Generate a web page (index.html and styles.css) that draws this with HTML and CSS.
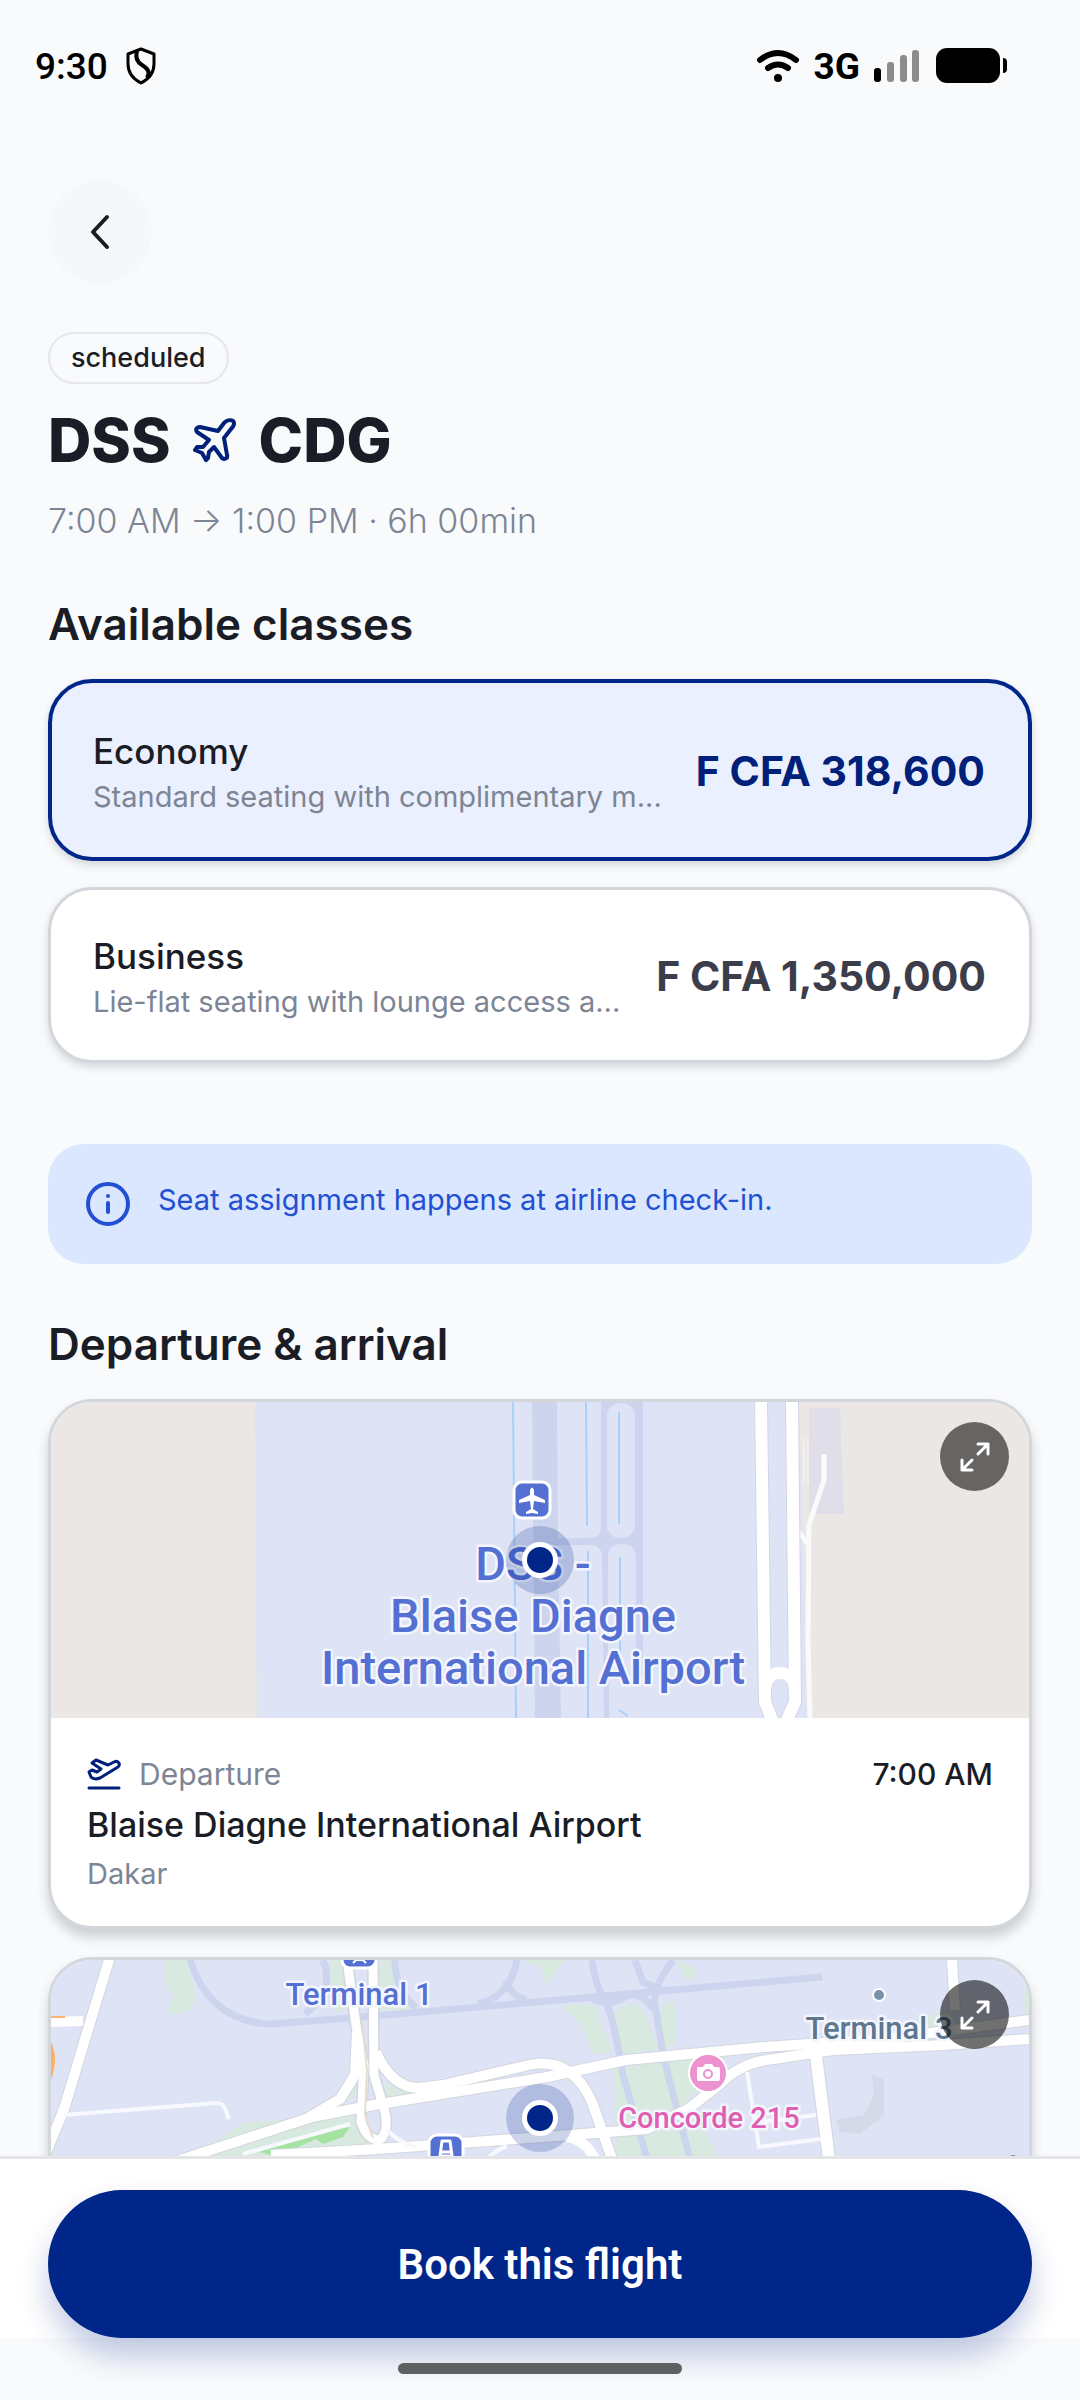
FILE: index.html
```html
<!DOCTYPE html>
<html lang="en">
<head>
  <meta charset="UTF-8">
  <meta name="viewport" content="width=device-width, initial-scale=1">
  <title>DSS - CDG</title>
  <link rel="stylesheet" href="styles.css">
</head>
<body>
  <!-- Status Bar -->
  <header class="status-bar">
    <div class="status-group">
      <span class="clock">9:30</span>
      <svg class="shield" width="30" height="38" viewBox="0 0 30 38" fill="none" stroke="#000" stroke-width="3" stroke-linejoin="round">
        <path d="M15 2 L28 7 V17 C28 26 23 32 15 36 C7 32 2 26 2 17 V7 Z"/>
        <path d="M11 4 C9 11 11 15 16 18 C23 22 24 26 21 31" stroke-width="4"/>
      </svg>
    </div>
    <div class="status-group">
      <svg class="wifi" width="44" height="34" viewBox="0 0 44 34" fill="none" stroke="#000" stroke-width="6" stroke-linecap="round">
        <path d="M4 11 Q22 -3 40 11"/>
        <path d="M12 19 Q22 12 32 19"/>
        <circle cx="22" cy="29" r="4" fill="#000" stroke="none"/>
      </svg>
      <span class="network">3G</span>
      <svg class="signal" width="46" height="34" viewBox="0 0 46 34">
        <rect x="0" y="19" width="7" height="14" rx="3" fill="#000"/>
        <rect x="13" y="13" width="7" height="20" rx="3" fill="#8c8c8d"/>
        <rect x="26" y="6" width="7" height="27" rx="3" fill="#8c8c8d"/>
        <rect x="38" y="1" width="7" height="32" rx="3" fill="#8c8c8d"/>
      </svg>
      <svg width="72" height="36" viewBox="0 0 72 36">
        <rect x="0" y="0" width="64" height="35" rx="11"/>
        <path d="M67 10 Q71 10 71 14 V21 Q71 25 67 25 Z"/>
      </svg>
    </div>
  </header>

  <!-- Flight Details -->
  <main class="content">
    <button class="back-button" type="button" aria-label="Back">
      <svg width="24" height="40" viewBox="0 0 24 40" fill="none" stroke="#1b1c24" stroke-width="4" stroke-linecap="round" stroke-linejoin="round">
        <path d="M19 5 L5 20 L19 35"/>
      </svg>
    </button>

    <span class="badge">scheduled</span>
    <h1 class="route">
      <span>DSS</span>
      <svg width="44" height="44" viewBox="0 0 44 44" fill="none" stroke="#00207a" stroke-width="4" stroke-linejoin="round" stroke-linecap="round">
        <path d="M40 3 C37 1 33 3 31 5 L25 13 L7 9 C4 9 2 11 4 14 L16 22 L10 29 L4 29 L2 32 L9 35 L13 42 L15 40 L16 34 L21 29 L29 40 C32 42 35 40 34 37 L31 20 L38 11 C41 8 42 5 40 3 Z"/>
      </svg>
      <span>CDG</span>
    </h1>
    <p class="times">7:00 AM → 1:00 PM · 6h 00min</p>

    <h2 class="section-title">Available classes</h2>
    <div class="class-list">
      <button class="fare selected" type="button" aria-pressed="true">
        <span class="fare-text">
          <span class="fare-name">Economy</span>
          <span class="fare-description">Standard seating with complimentary m...</span>
        </span>
        <span class="fare-price">F CFA 318,600</span>
      </button>
      <button class="fare" type="button" aria-pressed="false">
        <span class="fare-text">
          <span class="fare-name">Business</span>
          <span class="fare-description">Lie-flat seating with lounge access a...</span>
        </span>
        <span class="fare-price">F CFA 1,350,000</span>
      </button>
    </div>

    <div class="notice">
      <svg width="44" height="44" viewBox="0 0 44 44" fill="none" stroke="#2350d2" stroke-width="4" stroke-linecap="round">
        <circle cx="22" cy="22" r="20"/>
        <path d="M22 21 V30"/>
        <path d="M22 14 V14"/>
      </svg>
      <p class="notice-text">Seat assignment happens at airline check-in.</p>
    </div>

    <h2 class="section-title">Departure &amp; arrival</h2>
    <div class="airport-list">
      <article class="airport-card">
        <div class="map">
          <svg class="map-canvas" viewBox="0 0 978 316" preserveAspectRatio="xMidYMid slice">
            <rect width="978" height="316" fill="#eae7e4"/>
            <path d="M204 0 H748 L756 316 H206 Z" fill="#dee3f5"/>
            <!-- Runway and taxiways -->
            <path d="M481 0 H592 V273 H558 V316 H484 Z" fill="#cdd5ee"/>
            <g fill="#dee3f5">
              <path d="M506 0 H550 V124 Q550 136 538 136 H507 Z"/>
              <rect x="556" y="1" width="28" height="135" rx="13"/>
              <path d="M507 143 H539 Q551 143 551 155 L553 316 H510 Z"/>
              <path d="M557 156 Q557 142 571 142 Q585 142 585 156 V273 H557 Z"/>
            </g>
            <g fill="none" stroke="#a6d1fa" stroke-width="2">
              <path d="M462 0 L465 316"/>
              <path d="M535 0 L536 124"/>
              <path d="M568 10 V122"/>
              <path d="M537 149 V316"/>
              <path d="M569 155 V255"/>
              <path d="M568 308 L577 314"/>
            </g>
            <!-- Roads -->
            <path d="M758 6 H789 L793 112 H758 Z" fill="#e0dfe9"/>
            <g fill="none" stroke="#fbfafa">
              <path d="M753 36 V82 M757 36 V82" stroke-width="1"/>
              <path d="M773 52 V78 L758 123 L757 240 L759 316" stroke-width="5"/>
              <path d="M748 130 L757 142" stroke-width="5"/>
            </g>
            <g fill="none" stroke="#d2d7e4" stroke-width="14">
              <path d="M710 0 L714 300 L722 320"/>
              <path d="M741 0 L744 300 L735 320"/>
            </g>
            <g fill="none" stroke="#fff" stroke-width="12">
              <path d="M710 0 L714 300 L722 320"/>
              <path d="M741 0 L744 300 L735 320"/>
              <path d="M714 290 Q714 271 729 271 Q744 271 744 290"/>
            </g>
            <!-- Airport label -->
            <rect x="463" y="80" width="36" height="36" rx="8" fill="#5470d2" stroke="#fff" stroke-width="3"/>
            <path d="M479 88 Q481 83 483 88 V93 L494 98 V101 L483 99 L482 107 L487 110 V112 L481 111 L475 112 V110 L480 107 L479 99 L468 101 V98 L479 93 Z" fill="#fff"/>
            <g class="map-label map-label-large">
              <text x="482" y="178">DSS -</text>
              <text x="482" y="230">Blaise Diagne</text>
              <text x="482" y="282">International Airport</text>
            </g>
            <!-- Pin -->
            <circle cx="489" cy="158" r="34" fill="#00268a" fill-opacity="0.2"/>
            <circle cx="489" cy="158" r="18" fill="#fff"/>
            <circle cx="489" cy="158" r="13" fill="#00268a"/>
          </svg>
          <button class="expand-button" type="button" aria-label="Expand departure map">
            <svg width="30" height="30" viewBox="0 0 30 30" fill="none" stroke="#fff" stroke-width="3" stroke-linecap="round" stroke-linejoin="round">
              <path d="M18 12 L28 2 M18 2 H28 V12"/>
              <path d="M12 18 L2 28 M12 28 H2 V18"/>
            </svg>
          </button>
        </div>
        <div class="airport-info">
          <div class="airport-row">
            <svg width="34" height="32" viewBox="0 0 34 32" fill="none" stroke="#00207a" stroke-width="3" stroke-linejoin="round" stroke-linecap="round">
              <path d="M2 30 H32"/>
              <path d="M2 14 L5 12 L10 14 L14 11 L5 5 L9 2 L21 7 L27 4 C31 2 34 6 31 9 L13 20 C8 22 6 21 4 19 Z"/>
            </svg>
            <span class="airport-type">Departure</span>
            <span class="airport-time">7:00 AM</span>
          </div>
          <h3 class="airport-name">Blaise Diagne International Airport</h3>
          <p class="airport-city">Dakar</p>
        </div>
      </article>

      <article class="airport-card">
        <div class="map">
          <svg class="map-canvas" viewBox="0 0 978 316" preserveAspectRatio="xMidYMid slice">
            <rect width="978" height="316" fill="#dee3f5"/>
            <!-- Grass -->
            <g fill="#d8e9df">
              <path d="M115 0 H136 L146 37 Q138 54 127 54 L115 52 L124 35 L115 29 Z"/>
              <path d="M279 0 H291 L299 49 L282 52 Z"/>
              <path d="M330 0 H341 L346 22 L361 50 H327 Z"/>
              <path d="M471 0 H513 L496 25 L490 8 Z"/>
              <path d="M627 0 L643 8 L646 19 H634 Z"/>
              <path d="M511 45 H544 L561 92 L541 94 L530 65 Z"/>
              <path d="M563 55 Q576 36 592 50 L608 89 L572 95 Z"/>
              <path d="M608 60 L613 42 L625 42 V85 L611 89 Z"/>
              <path d="M563 109 L675 92 L668 115 L637 139 L668 199 V316 H568 Z"/>
              <path d="M302 115 L304 135 L262 158 L290 138 Z"/>
              <path d="M334 122 L362 135 L336 143 Z"/>
              <path d="M140 199 L193 162 L310 156 L312 175 L327 190 L190 199 Z"/>
              <path d="M860 65 Q880 50 905 52 V70 Z"/>
              <path d="M978 22 L971 38 L978 60 Z"/>
              <path d="M0 185 L8 199 V316 H0 Z"/>
            </g>
            <path d="M208 192 L251 175 L299 167 L292 177 L272 184 L265 179 L241 190 L220 195 Z" fill="#a4e3a2"/>
            <path d="M821 114 L833 120 V155 L809 174 L789 172 L785 160 L813 155 L823 135 Z" fill="#d6dae8"/>
            <!-- Taxiways -->
            <g fill="none" stroke="#cdd5ee" stroke-width="7">
              <path d="M139 0 Q158 60 217 64 Q260 62 519 39 L771 17"/>
              <path d="M272 0 Q285 30 254 54"/>
              <path d="M344 0 Q344 30 365 48"/>
              <path d="M466 0 Q460 36 427 44"/>
              <path d="M454 20 Q460 36 475 40"/>
              <path d="M541 0 Q544 25 554 40 Q562 55 572 115 L596 199 L630 316"/>
              <path d="M622 0 Q600 30 604 45 L613 99 L639 199 L668 316"/>
              <path d="M584 0 L592 22 L612 31"/>
              <path d="M540 38 Q560 48 575 36 Q590 30 603 50"/>
            </g>
            <!-- Roads -->
            <g fill="none" stroke="#d2d6de" stroke-linejoin="round" stroke-width="12">
              <path d="M61 -10 L13 149 L-6 195"/>
              <path d="M296 0 L306 72 L313 105 L310 162 Q316 180 329 180 Q338 172 334 152 L323 115 L322 0"/>
              <path d="M306 72 L304 115 L289 139 L255 159"/>
              <path d="M120 203 L261 157 L323 145 L496 117 L575 100 L713 87 L833 79 L978 60"/>
              <path d="M325 92 Q341 128 368 128 L392 125 L478 105 Q520 96 541 142 L561 199"/>
              <path d="M220 195 L327 189 L519 175 L596 169 L637 149 L668 125 Q690 102 723 99 L782 90 L892 85 L978 79"/>
              <path d="M765 96 L778 199 L790 316" stroke-width="14"/>
              <path d="M901 0 L904 50"/>
            </g>
            <g fill="none" stroke="#fff" stroke-linejoin="round" stroke-width="10">
              <path d="M0 62 L32 61"/>
              <path d="M61 -10 L13 149 L-6 195"/>
              <path d="M296 0 L306 72 L313 105 L310 162 Q316 180 329 180 Q338 172 334 152 L323 115 L322 0" stroke-width="9"/>
              <path d="M306 72 L304 115 L289 139 L255 159"/>
              <path d="M120 203 L261 157 L323 145 L496 117 L575 100 L713 87 L833 79 L978 60"/>
              <path d="M325 92 Q341 128 368 128 L392 125 L478 105 Q520 96 541 142 L561 199"/>
              <path d="M220 195 L327 189 L519 175 L596 169 L637 149 L668 125 Q690 102 723 99 L782 90 L892 85 L978 79"/>
              <path d="M765 96 L778 199 L790 316" stroke-width="12"/>
              <path d="M901 0 L904 50"/>
              <path d="M516 177 Q536 180 546 203"/>
            </g>
            <g fill="none" stroke="#f8f9fe" stroke-width="4">
              <path d="M13 155 L165 143 Q172 143 174 149 L178 159"/>
              <path d="M192 194 L299 164"/>
              <path d="M696 112 L708 187 L770 179"/>
              <path d="M709 162 L765 155"/>
              <path d="M336 170 Q350 184 365 187"/>
              <path d="M435 200 Q445 190 456 186"/>
            </g>
            <path d="M311 60 L316 110 L314 155 L322 178" fill="none" stroke="#e6dcd0" stroke-width="2"/>
            <path d="M0 57 H14" stroke="#fbb471" stroke-width="2"/>
            <path d="M0 82 Q8 98 0 120 Z" fill="#fbb067"/>
            <!-- Places -->
            <rect x="291" y="-28" width="34" height="36" rx="8" fill="#5470d2" stroke="#fff" stroke-width="3"/>
            <path d="M302 3 L305 0 H312 L315 3" fill="none" stroke="#fff" stroke-width="2"/>
            <rect x="378" y="175" width="34" height="36" rx="8" fill="#5470d2" stroke="#fff" stroke-width="3"/>
            <path d="M391 181 H399 L401 196 H389 Z M390 192 H400" fill="none" stroke="#fff" stroke-width="3" stroke-linejoin="round"/>
            <g class="map-label">
              <text x="308" y="45">Terminal 1</text>
              <text class="map-label-slate" x="828" y="79">Terminal 3</text>
              <text class="map-label-pink" x="658" y="168">Concorde 215</text>
            </g>
            <circle cx="828" cy="35" r="6" fill="#7891aa" stroke="#fff" stroke-width="2"/>
            <circle cx="657" cy="113" r="19" fill="#ec92cf" stroke="#fff" stroke-width="2"/>
            <path d="M647 107 H652 L654 104 H661 L663 107 H667 Q669 107 669 109 V119 Q669 121 667 121 H648 Q646 121 646 119 V109 Q646 107 647 107 Z" fill="#fff"/>
            <circle cx="657" cy="114" r="4" fill="#fff" stroke="#ec92cf" stroke-width="2"/>
            <circle cx="962" cy="208" r="11" fill="none" stroke="#222" stroke-width="3"/>
            <!-- Pin -->
            <circle cx="489" cy="158" r="34" fill="#00268a" fill-opacity="0.2"/>
            <circle cx="489" cy="158" r="18" fill="#fff"/>
            <circle cx="489" cy="158" r="13" fill="#00268a"/>
          </svg>
          <button class="expand-button" type="button" aria-label="Expand arrival map">
            <svg width="30" height="30" viewBox="0 0 30 30" fill="none" stroke="#fff" stroke-width="3" stroke-linecap="round" stroke-linejoin="round">
              <path d="M18 12 L28 2 M18 2 H28 V12"/>
              <path d="M12 18 L2 28 M12 28 H2 V18"/>
            </svg>
          </button>
        </div>
      </article>
    </div>
  </main>

  <!-- Booking Bar -->
  <footer class="booking-bar">
    <button class="book-button" type="button">Book this flight</button>
  </footer>
  <div class="gesture-bar"><span class="gesture-handle"></span></div>
</body>
</html>
```
FILE: styles.css
```css
/* Main Element Styles */
* {
  box-sizing: border-box;
}
body {
  display: flex;
  flex-direction: column;
  height: 100vh;
  margin: 0;
  font-family: Inter, "Liberation Sans", sans-serif;
  background-color: #f9fafc;
  color: #1a1d26;
  overflow: hidden;
}
h1, h2, h3, p {
  margin: 0;
}
button {
  font: inherit;
  color: inherit;
  cursor: pointer;
}
svg {
  display: block;
  flex: none;
}

/* Status Bar Styles */
.status-bar {
  display: flex;
  flex: none;
  justify-content: space-between;
  align-items: center;
  height: 132px;
  padding: 0 72px 0 35px;
  font-family: Roboto, sans-serif;
  color: #000;
}
.status-group {
  display: flex;
  align-items: center;
}
.clock {
  font-size: 37px;
  font-weight: 500;
}
.shield {
  margin-left: 18px;
}
.network {
  margin: 0 14px;
  font-size: 37px;
  font-weight: 700;
}
.signal {
  margin-right: 16px;
}

/* Content Styles */
.content {
  display: flex;
  flex-direction: column;
  flex: 1;
  min-height: 0;
  padding: 48px 48px 0;
  overflow: hidden;
}
.content > * {
  flex: none;
}
.back-button {
  display: flex;
  align-items: center;
  justify-content: center;
  width: 104px;
  height: 104px;
  padding: 0;
  border: none;
  border-radius: 50%;
  background-color: #f5f8f9;
}
.badge {
  align-self: flex-start;
  margin-top: 48px;
  padding: 0 21px;
  border: 2px solid #e5e7ea;
  border-radius: 26px;
  font-size: 27px;
  font-weight: 500;
  line-height: 48px;
}
.route {
  display: flex;
  align-items: center;
  gap: 22px;
  margin-top: 24px;
  font-size: 60px;
  font-weight: 800;
  line-height: 64px;
}
.times {
  margin-top: 26px;
  font-size: 34px;
  font-weight: 300;
  line-height: 46px;
  color: #7d8594;
}
.section-title {
  margin: 54px 0 29px;
  font-size: 44px;
  font-weight: 600;
  line-height: 52px;
}

/* Class Styles */
.class-list {
  display: flex;
  flex-direction: column;
  gap: 26px;
}
.fare {
  display: flex;
  align-items: center;
  justify-content: space-between;
  gap: 24px;
  padding: 38px 43px 36px 42px;
  border: 3px solid #d3d6db;
  border-radius: 44px;
  background-color: #fff;
  box-shadow: 0 4px 8px rgba(20, 40, 50, 0.16);
  text-align: left;
}
.fare.selected {
  padding: 40px 43px 38px 41px;
  border: 4px solid #00268a;
  background-color: #ebf0ff;
}
.fare-text {
  display: flex;
  flex-direction: column;
  padding-top: 4px;
}
.fare-name {
  font-size: 35px;
  font-weight: 500;
  line-height: 48px;
}
.fare-description {
  font-size: 29px;
  line-height: 44px;
  color: #7d8594;
  white-space: nowrap;
}
.fare-price {
  flex: none;
  font-size: 41px;
  font-weight: 700;
  color: #3b3e4a;
}
.selected .fare-price {
  color: #00207a;
}

/* Notice Styles */
.notice {
  display: flex;
  gap: 28px;
  margin-top: 81px;
  padding: 38px;
  border-radius: 36px;
  background-color: #dbe7fe;
}
.notice-text {
  font-size: 29px;
  line-height: 36px;
  color: #2350d2;
}

/* Airport Styles */
.airport-list {
  display: flex;
  flex-direction: column;
  gap: 28px;
}
.airport-card {
  border: 3px solid #d3d6db;
  border-radius: 44px;
  background-color: #fff;
  box-shadow: 0 8px 12px rgba(20, 40, 50, 0.2);
  overflow: hidden;
}
.map {
  position: relative;
}
.map-canvas {
  width: 100%;
  height: 316px;
}
.map-label {
  font-family: Roboto, sans-serif;
  font-size: 31px;
  font-weight: 500;
  text-anchor: middle;
  fill: #5470d2;
  stroke: #f4f6fe;
  stroke-width: 5px;
  stroke-linejoin: round;
  paint-order: stroke;
}
.map-label-large {
  font-size: 47px;
}
.map-label-slate {
  fill: #5d7790;
}
.map-label-pink {
  font-size: 29px;
  fill: #e05fb2;
}
.expand-button {
  position: absolute;
  top: 20px;
  right: 20px;
  display: flex;
  align-items: center;
  justify-content: center;
  width: 69px;
  height: 69px;
  padding: 0;
  border: none;
  border-radius: 50%;
  background-color: rgba(0, 0, 0, 0.56);
}
.airport-info {
  padding: 34px 36px 28px;
}
.airport-row {
  display: flex;
  align-items: center;
  gap: 18px;
  margin-bottom: 4px;
  font-size: 30px;
  line-height: 44px;
}
.airport-type {
  color: #7d8594;
}
.airport-time {
  margin-left: auto;
  font-weight: 500;
}
.airport-name {
  font-size: 34px;
  font-weight: 500;
  line-height: 50px;
}
.airport-city {
  font-size: 29px;
  line-height: 48px;
  color: #7d8594;
}

/* Booking Styles */
.booking-bar {
  position: relative;
  flex: none;
  padding: 31px 48px 0;
  border-top: 3px solid #e3e5e8;
  background-color: #fff;
}
.book-button {
  display: block;
  width: 100%;
  height: 148px;
  border: none;
  border-radius: 74px;
  background-color: #00268a;
  box-shadow: 0 18px 30px rgba(0, 38, 138, 0.24);
  color: #fff;
  font-family: Roboto, sans-serif;
  font-size: 42px;
  font-weight: 600;
}
.gesture-bar {
  display: flex;
  flex: none;
  justify-content: center;
  height: 62px;
  padding-top: 25px;
}
.gesture-handle {
  position: relative;
  width: 284px;
  height: 11px;
  border-radius: 6px;
  background-color: #5e6062;
}
```
